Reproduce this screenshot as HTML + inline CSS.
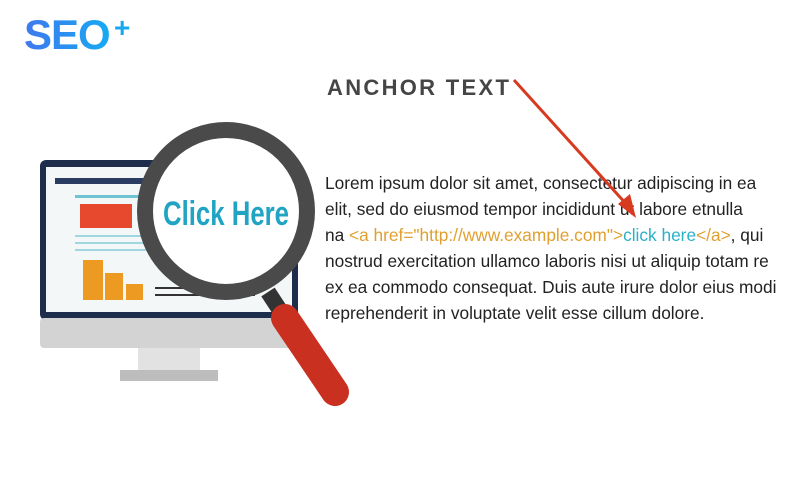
<!DOCTYPE html>
<html><head><style>
body{margin:0;width:800px;height:500px;background:#fff;position:relative;overflow:hidden;font-family:"Liberation Sans",sans-serif}
.logo{position:absolute;left:24px;top:11px;font-weight:bold;font-size:42px;letter-spacing:-1px;background:linear-gradient(90deg,#3f78ee,#16aaf2);-webkit-background-clip:text;color:transparent}
.plus{position:absolute;left:114px;top:12px;font-size:28px;font-weight:bold;color:#18a8f0}
.h{position:absolute;left:327px;top:75px;font-weight:bold;font-size:22px;color:#454545;letter-spacing:2.3px}
.t{position:absolute;left:325px;top:170px;font-size:17.3px;line-height:26px;color:#222;white-space:nowrap}
.o{color:#e0a030}.c{color:#2bb0c8}
</style></head><body>
<div class="logo">SEO</div><div class="plus">+</div>
<div class="h">ANCHOR TEXT</div>
<div class="t">Lorem ipsum dolor sit amet, consectetur adipiscing in ea<br>elit, sed do eiusmod tempor incididunt ut labore etnulla<br>na <span class="o">&lt;a href="http://www.example.com"&gt;</span><span class="c">click here</span><span class="o">&lt;/a&gt;</span>, qui<br>nostrud exercitation ullamco laboris nisi ut aliquip totam re<br>ex ea commodo consequat. Duis aute irure dolor eius modi<br>reprehenderit in voluptate velit esse cillum dolore.</div>
<svg width="800" height="500" style="position:absolute;left:0;top:0">
<line x1="514" y1="80" x2="628" y2="206" stroke="#d63a1f" stroke-width="3"/>
<polygon points="636,218 618,204 630,194" fill="#d63a1f"/>
<rect x="40" y="160" width="258" height="160" rx="6" fill="#1f2d4c"/>
<rect x="46" y="167" width="246" height="145" fill="#f4f7f8"/>
<rect x="40" y="318" width="258" height="30" rx="4" fill="#d3d3d3"/>
<rect x="138" y="348" width="62" height="22" fill="#e2e2e2"/>
<rect x="120" y="370" width="98" height="11" fill="#bdbdbd"/>
<rect x="55" y="178" width="230" height="6" fill="#2a3c62"/>
<rect x="75" y="195" width="80" height="3" fill="#6fc3d2"/>
<rect x="80" y="204" width="52" height="24" fill="#e6492e"/>
<rect x="75" y="235" width="80" height="2" fill="#9fd6e0"/>
<rect x="75" y="242" width="80" height="2" fill="#9fd6e0"/>
<rect x="75" y="249" width="80" height="2" fill="#9fd6e0"/>
<rect x="83" y="260" width="20" height="40" fill="#ec9a22"/>
<rect x="105" y="273" width="18" height="27" fill="#ec9a22"/>
<rect x="126" y="284" width="17" height="16" fill="#ec9a22"/>
<rect x="155" y="287" width="100" height="2" fill="#333"/>
<rect x="155" y="294" width="100" height="2" fill="#333"/>
<line x1="268" y1="292" x2="285" y2="318" stroke="#333" stroke-width="16"/>
<line x1="285" y1="318" x2="335" y2="392" stroke="#c9301f" stroke-width="28" stroke-linecap="round"/>
<circle cx="226" cy="211" r="81" fill="#fff" stroke="#4a4a4a" stroke-width="16"/>
<text x="226" y="225" text-anchor="middle" font-family="Liberation Sans" font-weight="bold" font-size="34" fill="#21a4c4" textLength="126" lengthAdjust="spacingAndGlyphs">Click Here</text>
</svg>
</body></html>
